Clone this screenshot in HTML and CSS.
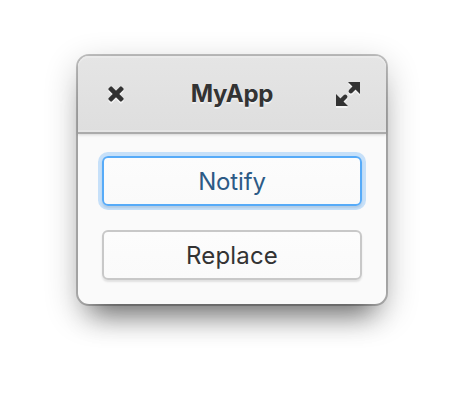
FILE: index.html
```html
<!DOCTYPE html>
<html lang="en">
<head>
<meta charset="utf-8">
<title>MyApp</title>
<link rel="stylesheet" href="styles.css">
</head>
<body>
<main class="window">
  <header class="headerbar">
    <button class="control" aria-label="Close">
      <svg width="32" height="32" viewBox="0 0 32 32"><g transform="rotate(45 16 16)" fill="currentColor"><rect x="6.8" y="13.7" width="18.4" height="4.6" rx="1.2"/><rect x="13.7" y="6.8" width="4.6" height="18.4" rx="1.2"/></g></svg>
    </button>
    <h1 class="title">MyApp</h1>
    <button class="control" aria-label="Maximize">
      <svg width="32" height="32" viewBox="0 0 32 32"><path d="M16 4H28V16L16 4ZM4 16V28H16L4 16Z" fill="currentColor"/><path d="M24 8 18.8 13.2M8 24 13.2 18.8" fill="none" stroke="currentColor" stroke-width="4.4" stroke-linecap="round"/></svg>
    </button>
  </header>
  <section class="content">
    <button class="button focused">Notify</button>
    <button class="button">Replace</button>
  </section>
</main>
</body>
</html>
```
FILE: styles.css
```css
* {
  box-sizing: border-box;
}

body {
  margin: 0;
  padding: 56px 78px;
  background: #fff;
  font-family: Inter, sans-serif;
  color: #333;
}

button {
  margin: 0;
  padding: 0;
  font: inherit;
  color: inherit;
}

.window {
  width: 308px;
  height: 248px;
  border-radius: 11px;
  background: #fafafa;
  box-shadow:
    0 0 0 2px rgba(0, 0, 0, 0.23),
    0 24px 26px -14px rgba(0, 0, 0, 0.46),
    0 10px 34px rgba(0, 0, 0, 0.24);
}

.headerbar {
  display: flex;
  align-items: center;
  justify-content: space-between;
  height: 78px;
  padding: 0 22px;
  border-bottom: 2px solid #ababab;
  border-radius: 11px 11px 0 0;
  background: linear-gradient(#e5e5e5, #dedede);
  box-shadow:
    inset 0 2px 0 #eaeaea,
    inset 0 -2px 0 #e5e5e5,
    0 1px 3px rgba(0, 0, 0, 0.15);
}

.control {
  width: 32px;
  height: 32px;
  border: 0;
  background: none;
}

.control svg {
  display: block;
  filter: drop-shadow(0 2px 0 rgba(255, 255, 255, 0.6));
}

.title {
  margin: 0;
  font-size: 24px;
  line-height: 32px;
  font-weight: 700;
  letter-spacing: -0.2px;
  text-shadow: 0 2px 0 rgba(255, 255, 255, 0.5);
}

.content {
  display: grid;
  gap: 24px;
  padding: 22px 24px;
}

.button {
  height: 50px;
  padding-top: 2px;
  border: 2px solid #c8c8c8;
  border-radius: 6px;
  background: linear-gradient(#fcfcfc, #fafafa);
  box-shadow: 0 2px 2px rgba(0, 0, 0, 0.1);
  font-size: 24px;
  line-height: 32px;
  letter-spacing: 0.15px;
}

.focused {
  border-color: #57abf8;
  color: #2c5a86;
  letter-spacing: -0.15px;
  box-shadow:
    0 0 0 4px rgba(100, 175, 245, 0.35),
    0 2px 2px rgba(0, 0, 0, 0.12);
}
```
